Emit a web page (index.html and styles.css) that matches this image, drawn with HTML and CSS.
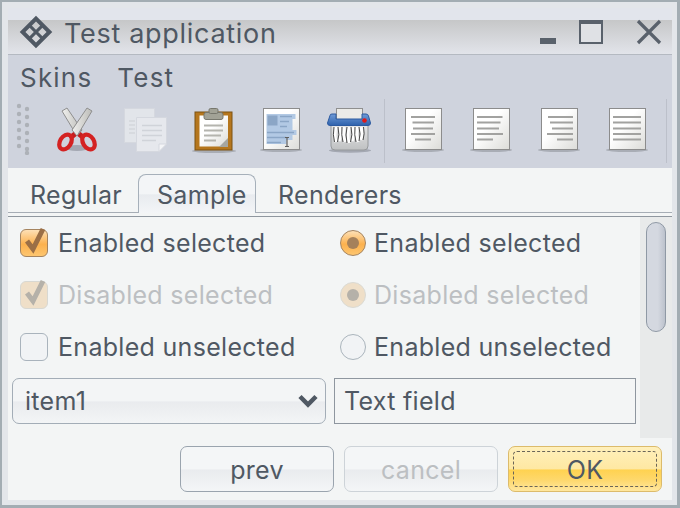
FILE: index.html
```html
<!DOCTYPE html>
<html lang="en">

<head>
    <meta charset="UTF-8">
    <title>Test application</title>
    <link rel="stylesheet" href="styles.css">
</head>

<body>
    <svg class="defs" width="0" height="0">
        <defs>
            <linearGradient id="paper" x1="0" y1="0" x2="1" y2="1">
                <stop offset="0.4" stop-color="#ffffff"/>
                <stop offset="1" stop-color="#dcdcd8"/>
            </linearGradient>
            <linearGradient id="blade" x1="0" y1="0" x2="1" y2="0">
                <stop offset="0" stop-color="#f0f0ee"/>
                <stop offset="1" stop-color="#bcbcb8"/>
            </linearGradient>
            <linearGradient id="blueTop" x1="0" y1="0" x2="0" y2="1">
                <stop offset="0" stop-color="#6f9bd8"/>
                <stop offset="1" stop-color="#2f62ac"/>
            </linearGradient>
            <linearGradient id="binBody" x1="0" y1="0" x2="0" y2="1">
                <stop offset="0" stop-color="#e6e7e8"/>
                <stop offset="1" stop-color="#bfc1c2"/>
            </linearGradient>
            <symbol id="page" viewBox="0 0 48 48">
                <ellipse cx="24" cy="45" rx="21" ry="2" fill="#a9adb5"/>
                <rect x="6.5" y="3.5" width="36" height="41" fill="url(#paper)" stroke="#8c8c8c"/>
            </symbol>
        </defs>
    </svg>

    <div class="window">
        <div class="title-bar">
            <div class="title-strip"></div>
            <div class="title-main">
                <svg class="app-icon" width="34" height="34" viewBox="0 0 34 34">
                    <g transform="rotate(45 17 17)" fill="none" stroke="#4f5863">
                        <rect x="7.500" y="7.500" width="19" height="19" stroke-width="4"/>
                        <path d="M17 8 V26 M8 17 H26" stroke-width="3"/>
                    </g>
                </svg>
                <span class="title-text">Test application</span>
                <div class="win-buttons">
                    <svg width="18" height="8" viewBox="0 0 18 8"><rect x="1" y="1" width="16" height="6" fill="#59616b"/></svg>
                    <svg width="26" height="26" viewBox="0 0 26 26"><rect x="1" y="2" width="22" height="21" fill="#dfe1e5" stroke="#59616b" stroke-width="2"/><rect x="0" y="0" width="24" height="4" fill="#59616b"/></svg>
                    <svg width="26" height="26" viewBox="0 0 26 26"><path d="M2 2 L24 24 M24 2 L2 24" stroke="#59616b" stroke-width="3.2" fill="none"/></svg>
                </div>
            </div>
        </div>

        <div class="menu-bar">
            <span>Skins</span>
            <span>Test</span>
        </div>

        <div class="tool-bar">
            <svg class="grip" width="16" height="52" viewBox="0 0 16 52">
                <g fill="#adb1b7">
                    <circle cx="3" cy="3" r="2.2"/><circle cx="11" cy="6" r="2.2"/>
                    <circle cx="3" cy="11" r="2.2"/><circle cx="11" cy="14" r="2.2"/>
                    <circle cx="3" cy="19" r="2.2"/><circle cx="11" cy="22" r="2.2"/>
                    <circle cx="3" cy="27" r="2.2"/><circle cx="11" cy="30" r="2.2"/>
                    <circle cx="3" cy="35" r="2.2"/><circle cx="11" cy="38" r="2.2"/>
                    <circle cx="3" cy="43" r="2.2"/><circle cx="11" cy="46" r="2.2"/>
                    <circle cx="11" cy="50" r="2.2"/>
                </g>
            </svg>

            <!-- cut -->
            <svg class="tool" viewBox="0 0 48 48">
                <ellipse cx="24" cy="43" rx="12" ry="3" fill="#a4a8b2"/>
                <path d="M9 6 L14 3 L29 25 L24 31 Z" fill="url(#blade)" stroke="#8f8f8f"/>
                <path d="M39 6 L34 3 L19 25 L24 31 Z" fill="url(#blade)" stroke="#8f8f8f"/>
                <path d="M22 29 L17 33 M26 29 L31 33" stroke="#c42020" stroke-width="5"/>
                <ellipse cx="12.500" cy="37" rx="5.500" ry="8" transform="rotate(32 12.500 37)" fill="none" stroke="#d42222" stroke-width="4.200"/>
                <ellipse cx="35.500" cy="37" rx="5.500" ry="8" transform="rotate(-32 35.500 37)" fill="none" stroke="#d42222" stroke-width="4.200"/>
            </svg>

            <!-- copy, disabled -->
            <svg class="tool" viewBox="0 0 48 48">
                <rect x="3.500" y="3.500" width="30" height="34" fill="#e2e5ea" stroke="#d5d8df"/>
                <path d="M8 16 H14 M8 20 H14 M8 24 H14 M8 28 H14" stroke="#d3d6dc" stroke-width="1.400"/>
                <path d="M15.500 12.500 H45.500 V39 L38 46.500 H15.500 Z" fill="#e6e8ed" stroke="#d5d8df"/>
                <path d="M38 46.500 V39 H45.500 Z" fill="#f4f5f7" stroke="#d5d8df"/>
                <path d="M21 20.500 H41 M21 25.500 H41 M21 30.500 H41 M21 35.500 H35" stroke="#d0d3d9" stroke-width="1.600"/>
            </svg>

            <!-- paste -->
            <svg class="tool" viewBox="0 0 48 48">
                <ellipse cx="25" cy="46" rx="22" ry="2" fill="#a9adb5"/>
                <rect x="6" y="7" width="37" height="38" fill="#b5761d" stroke="#7d5213"/>
                <rect x="10.500" y="10.500" width="28.500" height="31" fill="url(#paper)"/>
                <path d="M15 20.500 H34 M15 25.500 H34 M15 30.500 H32 M15 35.500 H27" stroke="#b4b4ae" stroke-width="1.800"/>
                <path d="M30 42 L39 33 V42 Z" fill="#a6a6a0"/>
                <rect x="15" y="7.500" width="19" height="7" rx="2" fill="#a2a296" stroke="#77776d"/>
                <rect x="20" y="3.500" width="9" height="5" rx="1.500" fill="#a2a296" stroke="#77776d"/>
            </svg>

            <!-- select all -->
            <svg class="tool" viewBox="0 0 48 48">
                <use href="#page" width="48" height="48"/>
                <rect x="9.500" y="9" width="29" height="5" fill="#b2c9e4"/>
                <rect x="9.500" y="14" width="26" height="5" fill="#b2c9e4"/>
                <rect x="9.500" y="19" width="26" height="6" fill="#b2c9e4"/>
                <rect x="9.500" y="25" width="30" height="5" fill="#b2c9e4"/>
                <rect x="9.500" y="30" width="26" height="5" fill="#b2c9e4"/>
                <rect x="9.500" y="35" width="20" height="4" fill="#b2c9e4"/>
                <rect x="10.500" y="10.500" width="10" height="10" fill="#8ba6c6"/>
                <path d="M23 11.500 H35 M23 16.500 H32 M23 21.500 H30 M10 27.500 H37 M10 32.500 H29 M10 37.500 H24" stroke="#8ba6c6" stroke-width="1.600"/>
                <path d="M28 32.500 H32 M30 32.500 V41.500 M28 41.500 H32" stroke="#5e5e5e" stroke-width="1.200" fill="none"/>
            </svg>

            <!-- shredder -->
            <svg class="tool" viewBox="0 0 48 48">
                <ellipse cx="25" cy="45.500" rx="21" ry="2.200" fill="#a4a8b2"/>
                <path d="M6 19 H43 V41 Q43 45 39 45 H10 Q6 45 6 41 Z" fill="url(#binBody)" stroke="#96999b"/>
                <rect x="11.500" y="3.500" width="26" height="11" fill="#ebebe8" stroke="#8f8f8f"/>
                <path d="M5 10.500 Q5 9 7 9 H11 V14 H37 V9 H41 Q43 9 43.500 11 L45.500 18 Q45.500 20.500 43 20.500 H5 Q2.500 20.500 2.500 18 Z" fill="url(#blueTop)" stroke="#2c5aa0"/>
                <circle cx="39.500" cy="15.500" r="2.300" fill="#e01818"/>
                <path d="M11 22 Q9 30 11 37 M15 22 Q17 30 14 36 M19 22 Q18 30 20 37 M24 22 Q22 30 24 38 M28 22 Q30 30 27 36 M32 22 Q31 30 33 37 M36 22 Q38 29 36 35" stroke="#ffffff" stroke-width="3" fill="none"/>
                <path d="M9 22 Q7.500 30 9.500 37 M13 22 Q15 30 12.500 37 M17 22 Q16 30 18 37 M22 22 Q20 30 22 38 M26 22 Q28 30 25.500 37 M30 22 Q29 30 31 37 M34 22 Q36 29 34 36 M38.500 22 Q40 29 38 35" stroke="#4a4a4a" stroke-width="1" fill="none"/>
            </svg>

            <div class="tool-sep tool-sep-first"></div>

            <!-- align center -->
            <svg class="tool" viewBox="0 0 48 48">
                <use href="#page" width="48" height="48"/>
                <path d="M12 12 H36 M13.500 17.500 H35 M14 23.500 H34 M12 29 H36 M16 34.500 H32" stroke="#a2a2a0" stroke-width="1.800"/>
            </svg>
            <!-- align left -->
            <svg class="tool" viewBox="0 0 48 48">
                <use href="#page" width="48" height="48"/>
                <path d="M10 12 H35.500 M10 17.500 H33.500 M10 23.500 H32 M10 29 H36 M10 34.500 H26" stroke="#a2a2a0" stroke-width="1.800"/>
            </svg>
            <!-- align right -->
            <svg class="tool" viewBox="0 0 48 48">
                <use href="#page" width="48" height="48"/>
                <path d="M13 12 H38 M15 17.500 H38 M17 23.500 H38 M12 29 H38 M22 34.500 H38" stroke="#a2a2a0" stroke-width="1.800"/>
            </svg>
            <!-- justify -->
            <svg class="tool" viewBox="0 0 48 48">
                <use href="#page" width="48" height="48"/>
                <path d="M10 12 H38 M10 17.500 H38 M10 23.500 H38 M10 29 H38 M10 34.500 H38" stroke="#a2a2a0" stroke-width="1.800"/>
            </svg>

            <div class="tool-sep tool-sep-last"></div>
        </div>

        <div class="tabs">
            <div class="tab-strip">
                <span class="tab tab-first">Regular</span>
                <span class="tab tab-selected">Sample</span>
                <span class="tab">Renderers</span>
            </div>
        </div>

        <div class="scroll-pane">
            <div class="pane-content">
                <div class="options">
                    <div class="option">
                        <span class="check check-on">
                            <svg width="28" height="30" viewBox="0 0 28 30"><path d="M7 15 L13 23 L23 3" fill="none" stroke="#9b6f46" stroke-width="5"/></svg>
                        </span>
                        <span>Enabled selected</span>
                    </div>
                    <div class="option">
                        <span class="radio radio-on"><i></i></span>
                        <span>Enabled selected</span>
                    </div>
                    <div class="option disabled">
                        <span class="check check-dis">
                            <svg width="28" height="30" viewBox="0 0 28 30"><path d="M7 15 L13 23 L23 3" fill="none" stroke="#b5b1a9" stroke-width="5"/></svg>
                        </span>
                        <span>Disabled selected</span>
                    </div>
                    <div class="option disabled">
                        <span class="radio radio-dis"><i></i></span>
                        <span>Disabled selected</span>
                    </div>
                    <div class="option">
                        <span class="check"></span>
                        <span>Enabled unselected</span>
                    </div>
                    <div class="option">
                        <span class="radio"></span>
                        <span>Enabled unselected</span>
                    </div>
                </div>
                <div class="fields">
                    <div class="combo">
                        <span>item1</span>
                        <svg width="20" height="14" viewBox="0 0 20 14"><path d="M2 2.500 L10 10.500 L18 2.500" fill="none" stroke="#4f5863" stroke-width="4.500"/></svg>
                    </div>
                    <div class="text-field">Text field</div>
                </div>
            </div>
            <div class="scroll-track">
                <div class="scroll-thumb"></div>
            </div>
        </div>

        <div class="actions">
            <div class="btn">prev</div>
            <div class="btn btn-disabled">cancel</div>
            <div class="btn btn-default"><span class="focus-ring">OK</span></div>
        </div>
    </div>
</body>

</html>
```

FILE: styles.css
```css
/* General styles */
body {
    margin: 0;
    width: 680px;
    height: 508px;
    overflow: hidden;
    font-family: Inter, "Liberation Sans", sans-serif;
    font-size: 25px;
    letter-spacing: 0.3px;
    color: #4f5863;
    background: #a3adb3;
}

.defs {
    display: block;
}

.window {
    box-sizing: border-box;
    width: 680px;
    height: 508px;
    border: solid #a3adb3;
    border-width: 2px 3px 3px 2px;
    padding: 6px 5px 5px 6px;
    background: #e3e6ea;
    display: flex;
    flex-direction: column;
}

/* Title bar */
.title-bar {
    height: 47px;
}

.title-strip {
    height: 12px;
    background: #e2e5ec;
}

.title-main {
    height: 35px;
    box-sizing: border-box;
    display: flex;
    align-items: center;
    padding: 0 10px 0 11px;
    background: linear-gradient(#c6c7c8, #e2e4ea);
    border-bottom: 1px solid #b4b9c1;
}

.app-icon {
    margin-right: 11px;
    margin-top: -11px;
}

.title-text {
    font-size: 27px;
    letter-spacing: 0.7px;
    margin-top: -8px;
}

.win-buttons {
    margin-left: auto;
    display: flex;
    align-items: flex-start;
    height: 35px;
}

.win-buttons svg:nth-child(1) {
    margin: 17px 22px 0 0;
}

.win-buttons svg:nth-child(2) {
    margin-right: 31px;
}

.win-buttons svg:nth-child(3) {
    margin-top: -1px;
}

/* Menu and tool bar */
.menu-bar {
    height: 39px;
    box-sizing: border-box;
    background: #cfd3dd;
    display: flex;
    align-items: center;
    gap: 25px;
    padding: 6px 0 0 12px;
    font-size: 26px;
    letter-spacing: 1.2px;
}

.tool-bar {
    height: 74px;
    box-sizing: border-box;
    background: #cfd3dd;
    display: flex;
    align-items: center;
    padding: 0 0 4px 8px;
}

.grip {
    margin-right: 21px;
    flex: none;
}

.tool {
    width: 48px;
    height: 48px;
    margin-right: 20px;
    flex: none;
}

.tool-sep {
    width: 1px;
    height: 64px;
    margin-top: 4px;
    background: #bcc0ca;
    flex: none;
}

.tool-sep-first {
    margin-left: -9px;
    margin-right: 14px;
}

.tool-sep-last {
    margin-left: -5px;
}

/* Tabs */
.tabs {
    height: 49px;
    box-sizing: border-box;
    background: #f3f5f5;
    padding-bottom: 3px;
    border-bottom: 1px solid #8f979f;
}

.tab-strip {
    height: 45px;
    box-sizing: border-box;
    display: flex;
    align-items: flex-end;
    border-bottom: 1px solid #a6adb5;
}

.tab {
    box-sizing: border-box;
    height: 39px;
    margin-bottom: -1px;
    padding: 0 0 0 22px;
    line-height: 42px;
}

.tab-first {
    padding-right: 16px;
}

.tab-selected {
    padding: 0 0 0 18px;
    width: 118px;
    border: 1px solid #a6b0ba;
    border-bottom: none;
    border-radius: 8px 8px 0 0;
    line-height: 40px;
    background: linear-gradient(#f3f5f7 50%, #e8ebef 52%, #f3f5f7);
}

/* Scroll pane */
.scroll-pane {
    height: 221px;
    display: flex;
    background: #f3f5f5;
}

.pane-content {
    width: 632px;
}

.options {
    display: grid;
    grid-template-columns: 320px 1fr;
    grid-auto-rows: 52px;
    padding-left: 12px;
    height: 156px;
}

.option {
    display: flex;
    align-items: center;
    gap: 10px;
    margin-top: -1px;
}

.disabled {
    color: #bcbfc2;
}

.check {
    box-sizing: border-box;
    width: 28px;
    height: 28px;
    border: 1px solid #a9b3bc;
    border-radius: 6px;
    background: #f1f3f5;
    display: flex;
    align-items: center;
    justify-content: center;
    flex: none;
}

.check svg {
    flex: none;
    margin-top: -4px;
}

.check-on {
    border-color: #a5845f;
    background: linear-gradient(#fde0b6, #fcb14e 55%, #fdc670);
}

.check-dis {
    border-color: #d8d8d2;
    background: #efdfc8;
}

.radio {
    box-sizing: border-box;
    width: 26px;
    height: 26px;
    border: 1px solid #aab4bc;
    border-radius: 50%;
    background: #f1f3f5;
    display: flex;
    align-items: center;
    justify-content: center;
    margin-right: -2px;
    flex: none;
}

.radio i {
    width: 12px;
    height: 12px;
    border-radius: 50%;
    background: #a5815b;
}

.radio-on {
    border-color: #a5845f;
    background: linear-gradient(#fde0b6, #fcb14e 55%, #fdc670);
}

.radio-dis {
    border-color: #dadad4;
    background: #efdfc8;
}

.radio-dis i {
    background: #b5b1a9;
}

.fields {
    display: flex;
    gap: 8px;
    padding: 5px 0 0 4px;
}

.combo {
    box-sizing: border-box;
    width: 314px;
    height: 46px;
    border: 1px solid #a3adb7;
    border-radius: 7px;
    background: linear-gradient(#f3f5f6 50%, #e9ebee 52%, #f3f5f6);
    display: flex;
    align-items: center;
    justify-content: space-between;
    padding: 0 7px 0 12px;
}

.text-field {
    box-sizing: border-box;
    width: 302px;
    height: 46px;
    border: 1px solid #8e969f;
    background: #f3f5f5;
    line-height: 44px;
    padding-left: 9px;
}

.scroll-track {
    width: 32px;
    background: #e8eaea;
    padding-top: 5px;
    box-sizing: border-box;
}

.scroll-thumb {
    box-sizing: border-box;
    width: 20px;
    height: 110px;
    margin-left: 6px;
    border: 1px solid #8f99a5;
    border-radius: 10px;
    background: linear-gradient(90deg, #d4d8e0, #d4d8e0 60%, #bcc2cc);
}

/* Buttons */
.actions {
    flex: 1;
    background: #f3f5f5;
    display: flex;
    justify-content: flex-end;
    gap: 10px;
    padding: 8px 10px 0 0;
}

.btn {
    box-sizing: border-box;
    width: 154px;
    height: 46px;
    border: 1px solid #9aa4ae;
    border-radius: 7px;
    background: linear-gradient(#f4f6f7 50%, #e9ebee 52%, #f4f6f7);
    text-align: center;
    line-height: 46px;
}

.btn-disabled {
    border-color: #cdd3d8;
    color: #bcbfc2;
}

.btn-default {
    border-color: #dcbb6b;
    background: linear-gradient(#fff0bb, #fee8a2 50%, #ffd250 52%, #fed86c 75%, #ffe79f);
    padding: 4px;
}

.focus-ring {
    display: block;
    box-sizing: border-box;
    height: 36px;
    border: 1px dashed #6a6558;
    border-radius: 4px;
    line-height: 36px;
}
```
